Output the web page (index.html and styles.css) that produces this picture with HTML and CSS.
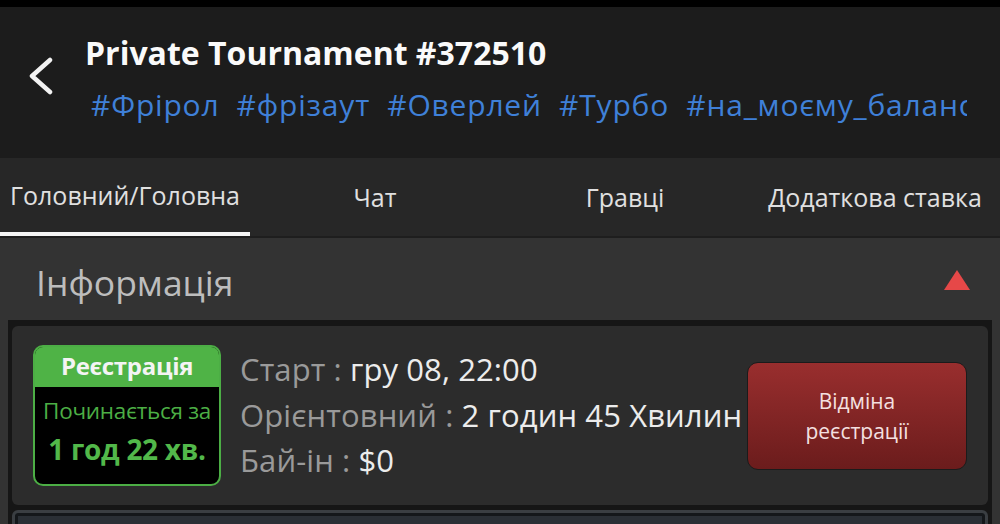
FILE: index.html
```html
<!DOCTYPE html>
<html lang="uk">
<head>
<meta charset="utf-8">
<link rel="stylesheet" href="styles.css">
</head>
<body>
<div class="topstrip"></div>
<header class="header">
  <div class="back">
    <svg width="28" height="38" viewBox="0 0 28 38"><path d="M23 3 L5 19 L23 35" fill="none" stroke="#f2f2f2" stroke-width="4.5" stroke-linecap="round" stroke-linejoin="round"/></svg>
  </div>
  <div class="titles">
    <div class="title">Private Tournament #372510</div>
    <div class="tags">#Фрірол&nbsp; #фрізаут&nbsp; #Оверлей&nbsp; #Турбо&nbsp; #на_моєму_балансі</div>
  </div>
</header>
<nav class="tabs">
  <div class="tab active">Головний/Головна</div>
  <div class="tab">Чат</div>
  <div class="tab">Гравці</div>
  <div class="tab">Додаткова ставка</div>
</nav>
<div class="divider"></div>
<section class="section">
  <div class="section-head">
    <span class="section-title">Інформація</span>
    <span class="tri"></span>
  </div>
  <div class="list">
    <div class="card">
      <div class="badge">
        <div class="badge-head">Реєстрація</div>
        <div class="badge-body">
          <div class="starts">Починається за</div>
          <div class="time">1 год 22 хв.</div>
        </div>
      </div>
      <div class="info">
        <div class="line"><span class="lbl">Старт : </span><span class="val">гру 08, 22:00</span></div>
        <div class="line"><span class="lbl">Орієнтовний : </span><span class="val">2 годин 45 Хвилин</span></div>
        <div class="line"><span class="lbl">Бай-ін : </span><span class="val">$0</span></div>
      </div>
      <button class="cancel">Відміна<br>реєстрації</button>
    </div>
    <div class="card2"></div>
  </div>
</section>
</body>
</html>
```

FILE: styles.css
```css
html, body {
  margin: 0;
  padding: 0;
  background: #333333;
  font-family: "Open Sans", "Noto Sans", sans-serif;
  overflow: hidden;
}
.topstrip {
  height: 7px;
  background: #000;
}
.header {
  height: 151px;
  background: #1c1c1c;
  display: flex;
  align-items: flex-start;
  box-sizing: border-box;
  padding-top: 24px;
}
.back {
  width: 85px;
  padding-left: 27px;
  box-sizing: border-box;
  padding-top: 26px;
}
.back svg { display: block; }
.titles {
  flex: 1;
  min-width: 0;
  padding-right: 33px;
}
.title {
  color: #fafafa;
  font-weight: 700;
  font-size: 32px;
  line-height: 44px;
  white-space: nowrap;
}
.tags {
  color: #3f80d8;
  font-size: 30px;
  letter-spacing: 0.8px;
  line-height: 42px;
  margin-top: 9px;
  padding-left: 6px;
  white-space: nowrap;
  overflow: hidden;
}
.tabs {
  height: 78px;
  background: #272727;
  display: grid;
  grid-template-columns: repeat(4, 1fr);
}
.tab {
  color: #e0e0e0;
  font-size: 25px;
  display: flex;
  align-items: center;
  justify-content: center;
  box-sizing: border-box;
  white-space: nowrap;
}
.tab.active {
  border-bottom: 4px solid #f5f5f5;
}
.divider {
  height: 2px;
  background: #1e1e1e;
}
.section {
  background: #333333;
}
.section-head {
  height: 82px;
  display: flex;
  align-items: center;
  justify-content: space-between;
  padding: 0 30px 0 36px;
}
.section-title {
  color: #bdbdbd;
  font-size: 35.5px;
  padding-top: 6px;
}
.tri {
  width: 0;
  height: 0;
  border-left: 13px solid transparent;
  border-right: 13px solid transparent;
  border-bottom: 20px solid #e64848;
  margin-top: 2px;
}
.list {
  margin: 0 8px;
  background: #161616;
  padding: 6px 4px 0;
  display: flex;
  flex-direction: column;
  gap: 5px;
}
.card {
  height: 179px;
  background: #2c2c2c;
  border-radius: 6px;
  display: flex;
  align-items: center;
  padding: 0 21px;
}
.badge {
  width: 188px;
  height: 141px;
  border: 2px solid #4cae45;
  border-radius: 10px;
  box-sizing: border-box;
  overflow: hidden;
  background: #000;
  flex-shrink: 0;
  display: flex;
  flex-direction: column;
}
.badge-head {
  height: 40px;
  flex-shrink: 0;
  background: #4fb346;
  color: #f4f4f4;
  font-weight: 700;
  font-size: 24px;
  text-align: center;
  line-height: 38px;
  letter-spacing: -0.3px;
}
.badge-body {
  flex: 1;
  text-align: center;
  padding-top: 9px;
}
.starts {
  color: #4cae45;
  font-size: 22.5px;
  line-height: 30px;
  white-space: nowrap;
  letter-spacing: -0.3px;
}
.time {
  color: #52b84a;
  font-weight: 700;
  font-size: 28px;
  line-height: 40px;
  margin-top: 3px;
  letter-spacing: -0.3px;
  white-space: nowrap;
}
.info {
  margin-left: 19px;
  flex: 1;
  white-space: nowrap;
}
.line {
  font-size: 31px;
  line-height: 45.5px;
  letter-spacing: 0.1px;
}
.lbl { color: #9a9a9a; }
.val { color: #ececec; }
.cancel {
  width: 220px;
  height: 108px;
  flex-shrink: 0;
  border: 1px solid #1b1b1b;
  border-radius: 11px;
  background: linear-gradient(#992e2e, #6b1c1c);
  color: #f4e0e0;
  font-family: inherit;
  font-size: 21px;
  line-height: 30px;
  padding: 0;
}
.card2 {
  height: 40px;
  background: #2a2f35;
  border: 3px solid #3a3e42;
  box-shadow: inset 0 0 0 3px #14171a;
  border-radius: 6px;
}
```
